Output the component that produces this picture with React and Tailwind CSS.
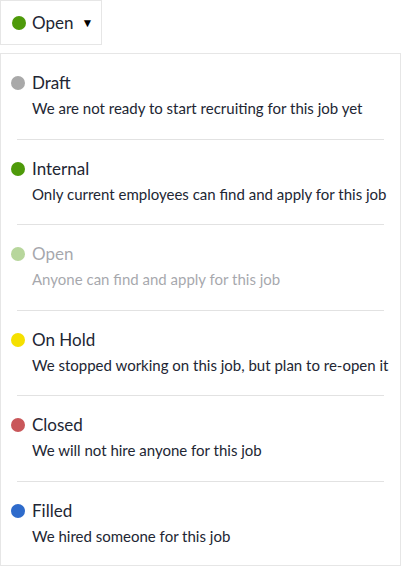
import React, { useState } from "react";

const statuses = [
    { key: "draft", label: "Draft", color: "bg-[#a9a9a9]", text: "We are not ready to start recruiting for this job yet" },
    { key: "internal", label: "Internal", color: "bg-[#4e9a0a]", text: "Only current employees can find and apply for this job" },
    { key: "open", label: "Open", color: "bg-[#4e9a0a]", text: "Anyone can find and apply for this job" },
    { key: "hold", label: "On Hold", color: "bg-[#f5e000]", text: "We stopped working on this job, but plan to re-open it" },
    { key: "closed", label: "Closed", color: "bg-[#c9575a]", text: "We will not hire anyone for this job" },
    { key: "filled", label: "Filled", color: "bg-[#2e6bcb]", text: "We hired someone for this job" },
];

export default function App() {
    const [current, setCurrent] = useState("open");
    const active = statuses.find(s => s.key === current);

    return (
        <div className="w-[402px] h-[566px] bg-white font-['Lato','Liberation_Sans',sans-serif] text-[#222633]">
            <button className="flex items-center h-[45px] w-[102px] pl-[11px] border border-[#e6e6e6] bg-white">
                <span className={`w-[14px] h-[14px] rounded-full ${active.color}`} />
                <span className="ml-[6px] text-[17px] leading-6">{active.label}</span>
                <span className="ml-[8px] text-[12px] leading-none text-black">▼</span>
            </button>

            <div className="mt-[8px] w-[401px] h-[513px] border border-[#e6e6e6]">
                {statuses.map((s, i) => {
                    const selected = s.key === current;
                    return (
                        <div key={s.key}>
                            {i > 0 && <div className="mx-4 h-px bg-[#e2e2e2]" />}
                            <div
                                onClick={() => setCurrent(s.key)}
                                className={`px-[10px] pt-[17px] pb-[19.5px] cursor-pointer ${selected ? "opacity-40" : ""}`}
                            >
                                <div className="flex items-center">
                                    <span className={`w-[14px] h-[14px] rounded-full ${s.color}`} />
                                    <span className="ml-[7px] text-[17px] leading-6">{s.label}</span>
                                </div>
                                <p className="mt-[2px] ml-[21px] text-[15px] leading-[22px]">{s.text}</p>
                            </div>
                        </div>
                    );
                })}
            </div>
        </div>
    );
}
